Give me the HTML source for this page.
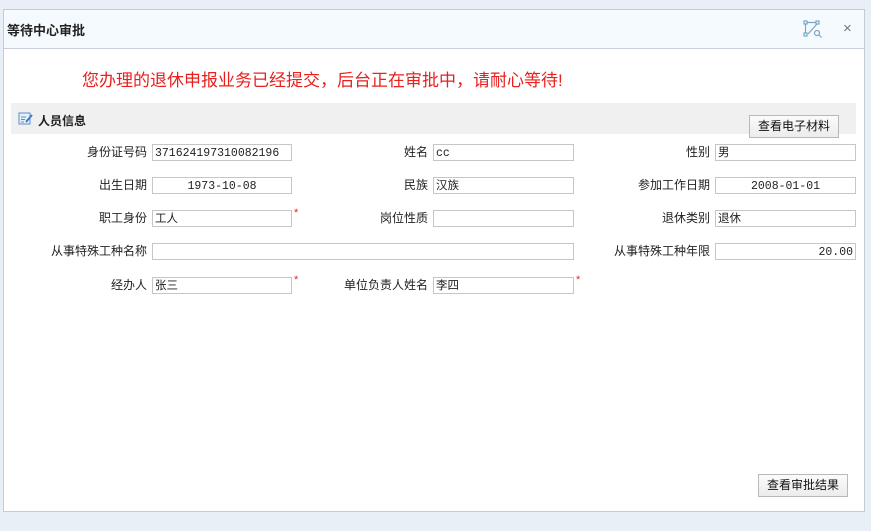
<!DOCTYPE html>
<html><head><meta charset="utf-8"><style>
body{margin:0;width:871px;height:531px;background:#e9eff7;position:relative;overflow:hidden;font-family:"Liberation Sans","Noto Sans CJK SC",sans-serif;font-size:12px;color:#222}
.dlg{position:absolute;left:3px;top:9px;width:860px;height:501px;background:#fff;border:1px solid #c3cbd4}
.hd{position:absolute;left:0;top:0;width:860px;height:38px;background:#f4fafd;border-bottom:1px solid #c9cfd6}
.ttl{position:absolute;left:3px;top:10px;font-size:13px;font-weight:bold;color:#222}
.msg{position:absolute;left:78px;top:56px;font-size:17px;color:#e8201e}
.bar{position:absolute;left:11px;top:103px;width:845px;height:31px;background:#f0f0f0}
.bar b{position:absolute;left:27px;top:9px;font-size:12px}
.btn{position:absolute;height:21px;border:1px solid #b9b9b9;background:linear-gradient(#fbfbfb,#ececec);font-size:12px;text-align:center;line-height:21px;color:#111}
.l{position:absolute;text-align:right;width:142px;font-size:12px;line-height:16px}
.i{position:absolute;height:17px;border:1px solid #c6c6c6;background:#fff;font-family:"Liberation Mono","Noto Sans CJK SC",monospace;font-size:11.5px;line-height:17px;padding:0 2px;box-sizing:border-box}
.s{position:absolute;color:#e22;font-size:11px}
</style></head><body>
<div class="dlg">
<div class="hd"><div class="ttl">等待中心审批</div>
<svg style="position:absolute;left:799px;top:10px" width="20" height="18" viewBox="0 0 20 18" fill="none" stroke="#7aa6c8" stroke-width="1.2"><rect x="1" y="1" width="3" height="3"/><rect x="13" y="1" width="3" height="3"/><rect x="1" y="13" width="3" height="3"/><path d="M4 2.5h9M2.5 4v9M14 4l-9 10"/><circle cx="14" cy="13" r="2.5"/><path d="M16 15l2.5 2.5"/></svg>
<div style="position:absolute;left:839px;top:10px;font-size:15px;color:#777">×</div></div>
<div class="msg">您办理的退休申报业务已经提交，后台正在审批中，请耐心等待!</div>
</div>
<div class="bar"><svg style="position:absolute;left:7px;top:8px" width="15" height="15" viewBox="0 0 15 15"><rect x="1" y="2" width="11" height="11" fill="#e6f0fb" stroke="#5b8fc8"/><path d="M3 6h5M3 8.5h4M3 11h3" stroke="#5b8fc8"/><path d="M8 11l6-7" stroke="#3a7cc4" stroke-width="2"/></svg><b>人员信息</b></div>
<div class="btn" style="left:749px;top:115px;width:88px">查看电子材料</div>
<div class="l" style="left:5px;top:144px">身份证号码</div><div class="i" style="left:152px;top:144px;width:140px">371624197310082196</div>
<div class="l" style="left:286px;top:144px">姓名</div><div class="i" style="left:433px;top:144px;width:141px">cc</div>
<div class="l" style="left:568px;top:144px">性别</div><div class="i" style="left:715px;top:144px;width:141px">男</div>
<div class="l" style="left:5px;top:177px">出生日期</div><div class="i" style="left:152px;top:177px;width:140px;text-align:center">1973-10-08</div>
<div class="l" style="left:286px;top:177px">民族</div><div class="i" style="left:433px;top:177px;width:141px">汉族</div>
<div class="l" style="left:568px;top:177px">参加工作日期</div><div class="i" style="left:715px;top:177px;width:141px;text-align:center">2008-01-01</div>
<div class="l" style="left:5px;top:210px">职工身份</div><div class="i" style="left:152px;top:210px;width:140px">工人</div><div class="s" style="left:294px;top:207px">*</div>
<div class="l" style="left:286px;top:210px">岗位性质</div><div class="i" style="left:433px;top:210px;width:141px"></div>
<div class="l" style="left:568px;top:210px">退休类别</div><div class="i" style="left:715px;top:210px;width:141px">退休</div>
<div class="l" style="left:5px;top:243px">从事特殊工种名称</div><div class="i" style="left:152px;top:243px;width:422px"></div>
<div class="l" style="left:568px;top:243px">从事特殊工种年限</div><div class="i" style="left:715px;top:243px;width:141px;text-align:right">20.00</div>
<div class="l" style="left:5px;top:277px">经办人</div><div class="i" style="left:152px;top:277px;width:140px">张三</div><div class="s" style="left:294px;top:274px">*</div>
<div class="l" style="left:286px;top:277px">单位负责人姓名</div><div class="i" style="left:433px;top:277px;width:141px">李四</div><div class="s" style="left:576px;top:274px">*</div>
<div class="btn" style="left:758px;top:474px;width:88px">查看审批结果</div>
</body></html>
